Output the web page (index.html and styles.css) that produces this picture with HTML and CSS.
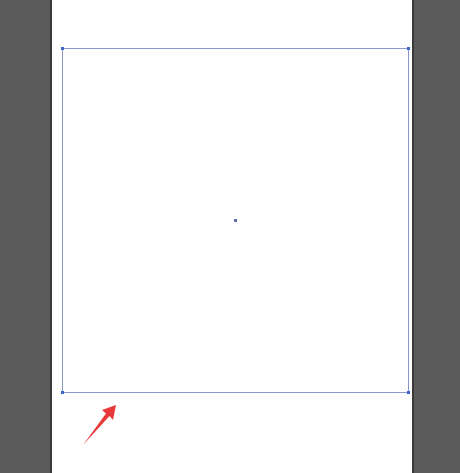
FILE: index.html
```html
<!DOCTYPE html>
<html>
<head>
<meta charset="utf-8">
<link rel="stylesheet" href="styles.css">
</head>
<body>
<div class="page">
  <div class="frame">
    <span class="anchor tl"></span>
    <span class="anchor tr"></span>
    <span class="anchor bl"></span>
    <span class="anchor br"></span>
    <span class="center"></span>
  </div>
</div>
<svg class="arrow" width="40" height="50" viewBox="80 400 40 50">
  <polygon points="116,405 102,410 106,413.5 83,445 109.5,416 113,420" fill="#e8393a"/>
</svg>
</body>
</html>
```
FILE: styles.css
```css
html, body {
  margin: 0;
  padding: 0;
}
body {
  background: #5b5b5b;
  width: 460px;
  height: 473px;
  overflow: hidden;
  position: relative;
}
.page {
  box-sizing: border-box;
  margin-left: 50px;
  width: 364px;
  height: 473px;
  background: #ffffff;
  border-left: 2px solid #3a3a3a;
  border-right: 2px solid #3a3a3a;
  padding: 48px 0 0 10px;
}
.frame {
  box-sizing: border-box;
  position: relative;
  width: 347px;
  height: 345px;
  border: 1px solid #8799c6;
}
.anchor {
  position: absolute;
  width: 3px;
  height: 3px;
  background: #3f63cc;
}
.tl { left: -2px; top: -2px; }
.tr { right: -2px; top: -2px; }
.bl { left: -2px; bottom: -2px; }
.br { right: -2px; bottom: -2px; }
.center {
  position: absolute;
  left: 171px;
  top: 170px;
  width: 3px;
  height: 3px;
  background: #5870a8;
}
.arrow {
  position: absolute;
  left: 80px;
  top: 400px;
}
```
